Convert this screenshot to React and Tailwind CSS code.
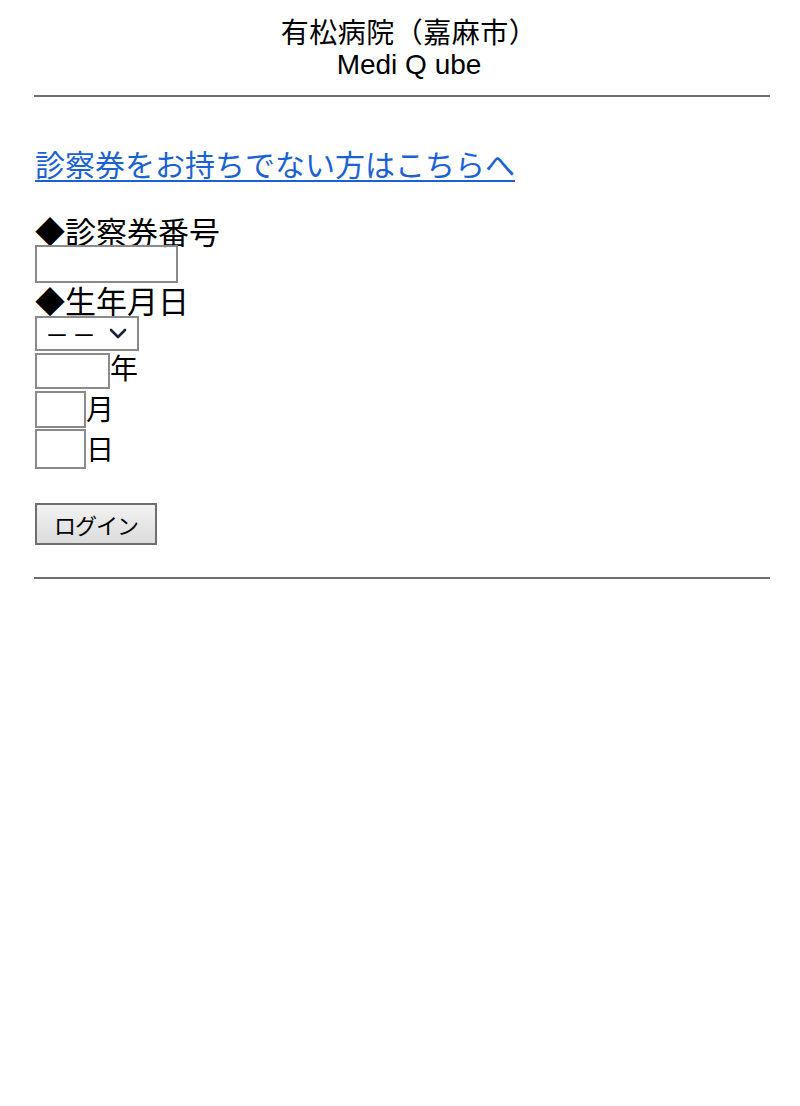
import React from "react";

const jp = { fontFamily: '"Noto Sans CJK JP", "Liberation Sans", sans-serif' };

export default function App() {
  return (
    <div className="w-[800px] min-h-[1106px] bg-white text-black" style={jp}>
      <div className="flex flex-col items-center pt-[14px] pl-[18px]">
        <div className="h-[34px] leading-[34px] text-[28px] tracking-[0.5px]">有松病院（嘉麻市）</div>
        <div className="h-[34px] leading-[34px] text-[28px]" style={{ fontFamily: '"Liberation Sans", Arial, sans-serif' }}>Medi Q ube</div>
      </div>
      <div className="ml-[34px] w-[736px] h-[2px] bg-[#6e6e6e] mt-[13px]" />

      <div className="ml-[35px] flex flex-col items-start">
        <a href="#" className="mt-[49px] h-[34px] leading-[34px] text-[30px] text-[#1a62d4] underline decoration-[2px] underline-offset-[4px]">
          診察券をお持ちでない方はこちらへ
        </a>

        <div className="mt-[35px] h-[30px] text-[31px] leading-none flex items-center">
          <span className="text-[30px] leading-none">◆</span>
          <span className="leading-none">診察券番号</span>
        </div>
        <input className="block w-[143px] h-[38px] border-2 border-[#8a8a8a] outline-none" />

        <div className="h-[33px] text-[31px] leading-none flex items-center">
          <span className="text-[30px] leading-none">◆</span>
          <span className="leading-none">生年月日</span>
        </div>
        <div className="w-[104px] h-[35px] border-2 border-[#8a8a8a] flex items-center justify-between px-[8px]">
          <span className="text-[24px] leading-none tracking-[3px]">－－</span>
          <svg width="18" height="12" viewBox="0 0 18 12" className="mr-[2px]">
            <path d="M2 2 L9 9 L16 2" fill="none" stroke="#1b2340" strokeWidth="2.6" strokeLinecap="round" strokeLinejoin="round" />
          </svg>
        </div>

        <div className="mt-[2px] flex items-start">
          <input className="block w-[75px] h-[36px] border-2 border-[#8a8a8a] outline-none" />
          <span className="text-[28px] leading-[30px] -mt-[1px]">年</span>
        </div>
        <div className="mt-[2px] flex items-start">
          <input className="block w-[51px] h-[37px] border-2 border-[#8a8a8a] outline-none" />
          <span className="text-[28px] leading-[30px] mt-[2px]">月</span>
        </div>
        <div className="mt-[1px] flex items-start">
          <input className="block w-[51px] h-[40px] border-2 border-[#8a8a8a] outline-none" />
          <span className="text-[28px] leading-[30px] mt-[4px]">日</span>
        </div>

        <button className="mt-[34px] w-[122px] h-[42px] border-2 border-[#6f6f6f] bg-gradient-to-b from-[#f2f2f2] to-[#dcdcdc] text-[22px] leading-none flex items-center justify-center tracking-[-1px]">
          ログイン
        </button>
      </div>

      <div className="ml-[34px] w-[736px] h-[2px] bg-[#6e6e6e] mt-[32px]" />
    </div>
  );
}
